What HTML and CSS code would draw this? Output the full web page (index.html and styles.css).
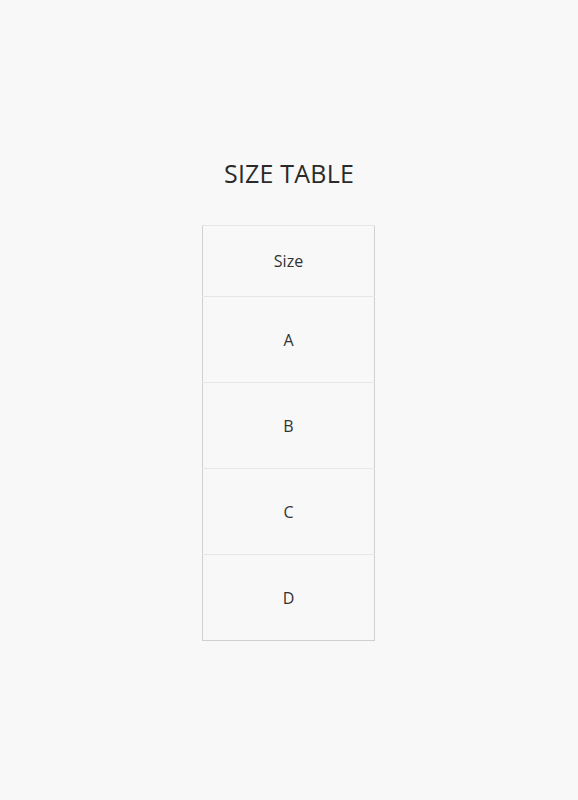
FILE: index.html
```html
<!DOCTYPE html>
<html>
<head>
<meta charset="utf-8">
<link rel="stylesheet" href="styles.css">
</head>
<body>
<main class="page">
  <h1 class="title">SIZE TABLE</h1>
  <table class="size-table">
    <thead>
      <tr><th>Size</th></tr>
    </thead>
    <tbody>
      <tr><td>A</td></tr>
      <tr><td>B</td></tr>
      <tr><td>C</td></tr>
      <tr><td>D</td></tr>
    </tbody>
  </table>
</main>
</body>
</html>
```
FILE: styles.css
```css
html, body {
  margin: 0;
  padding: 0;
  background: #f8f8f8;
}
body {
  font-family: "Open Sans", "Liberation Sans", sans-serif;
  color: #333;
}
.page {
  display: flex;
  flex-direction: column;
  align-items: center;
  padding-top: 156px;
}
.title {
  margin: 0 0 35px;
  font-size: 25px;
  font-weight: 400;
  line-height: 34px;
  color: #2a2a2a;
  letter-spacing: 0.2px;
}
.size-table {
  border-collapse: collapse;
  width: 173px;
  border: 1px solid #d0d0d0;
  margin-right: 1px;
}
.size-table th,
.size-table td {
  text-align: center;
  font-size: 16px;
  font-weight: 400;
  padding: 0;
  color: #333;
  border-top: 1px solid #e6e6e6;
}
.size-table th {
  height: 70px;
}
.size-table td {
  height: 85px;
}
```
